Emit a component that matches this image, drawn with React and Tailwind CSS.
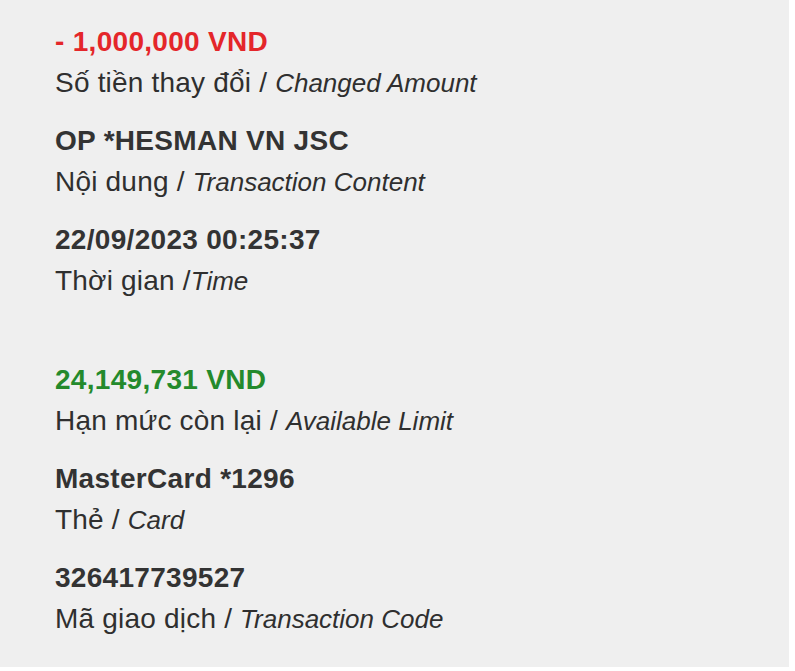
export default function App() {
  const rows = [
    { value: "- 1,000,000 VND", color: "text-[#e4262a]", vi: "Số tiền thay đổi / ", en: "Changed Amount" },
    { value: "OP *HESMAN VN JSC", color: "text-[#333333]", vi: "Nội dung / ", en: "Transaction Content" },
    { value: "22/09/2023 00:25:37", color: "text-[#333333]", vi: "Thời gian /", en: "Time" },
  ]
  const rows2 = [
    { value: "24,149,731 VND", color: "text-[#248a2c]", vi: "Hạn mức còn lại / ", en: "Available Limit" },
    { value: "MasterCard *1296", color: "text-[#333333]", vi: "Thẻ / ", en: "Card" },
    { value: "326417739527", color: "text-[#333333]", vi: "Mã giao dịch / ", en: "Transaction Code" },
  ]

  const Row = ({ r }) => (
    <div className="flex flex-col">
      <div className={`text-[28px] leading-[41px] font-bold tracking-[0.3px] ${r.color}`}>{r.value}</div>
      <div className="text-[28px] leading-[41px] tracking-[0.2px] text-[#2f2f2f] whitespace-pre">
        {r.vi}<span className="italic text-[26px] leading-[20px] tracking-normal">{r.en}</span>
      </div>
    </div>
  )

  return (
    <div className="w-[795px] h-[671px] bg-white overflow-hidden" style={{ fontFamily: "'Liberation Sans', Arial, sans-serif" }}>
      <div className="w-[789px] h-[667px] bg-[#efefef] pl-[55px] pt-[21px]">
        <div className="flex flex-col gap-[17px]">
          {rows.map((r) => <Row key={r.value} r={r} />)}
        </div>
        <div className="flex flex-col gap-[17px] mt-[58px]">
          {rows2.map((r) => <Row key={r.value} r={r} />)}
        </div>
      </div>
    </div>
  )
}
